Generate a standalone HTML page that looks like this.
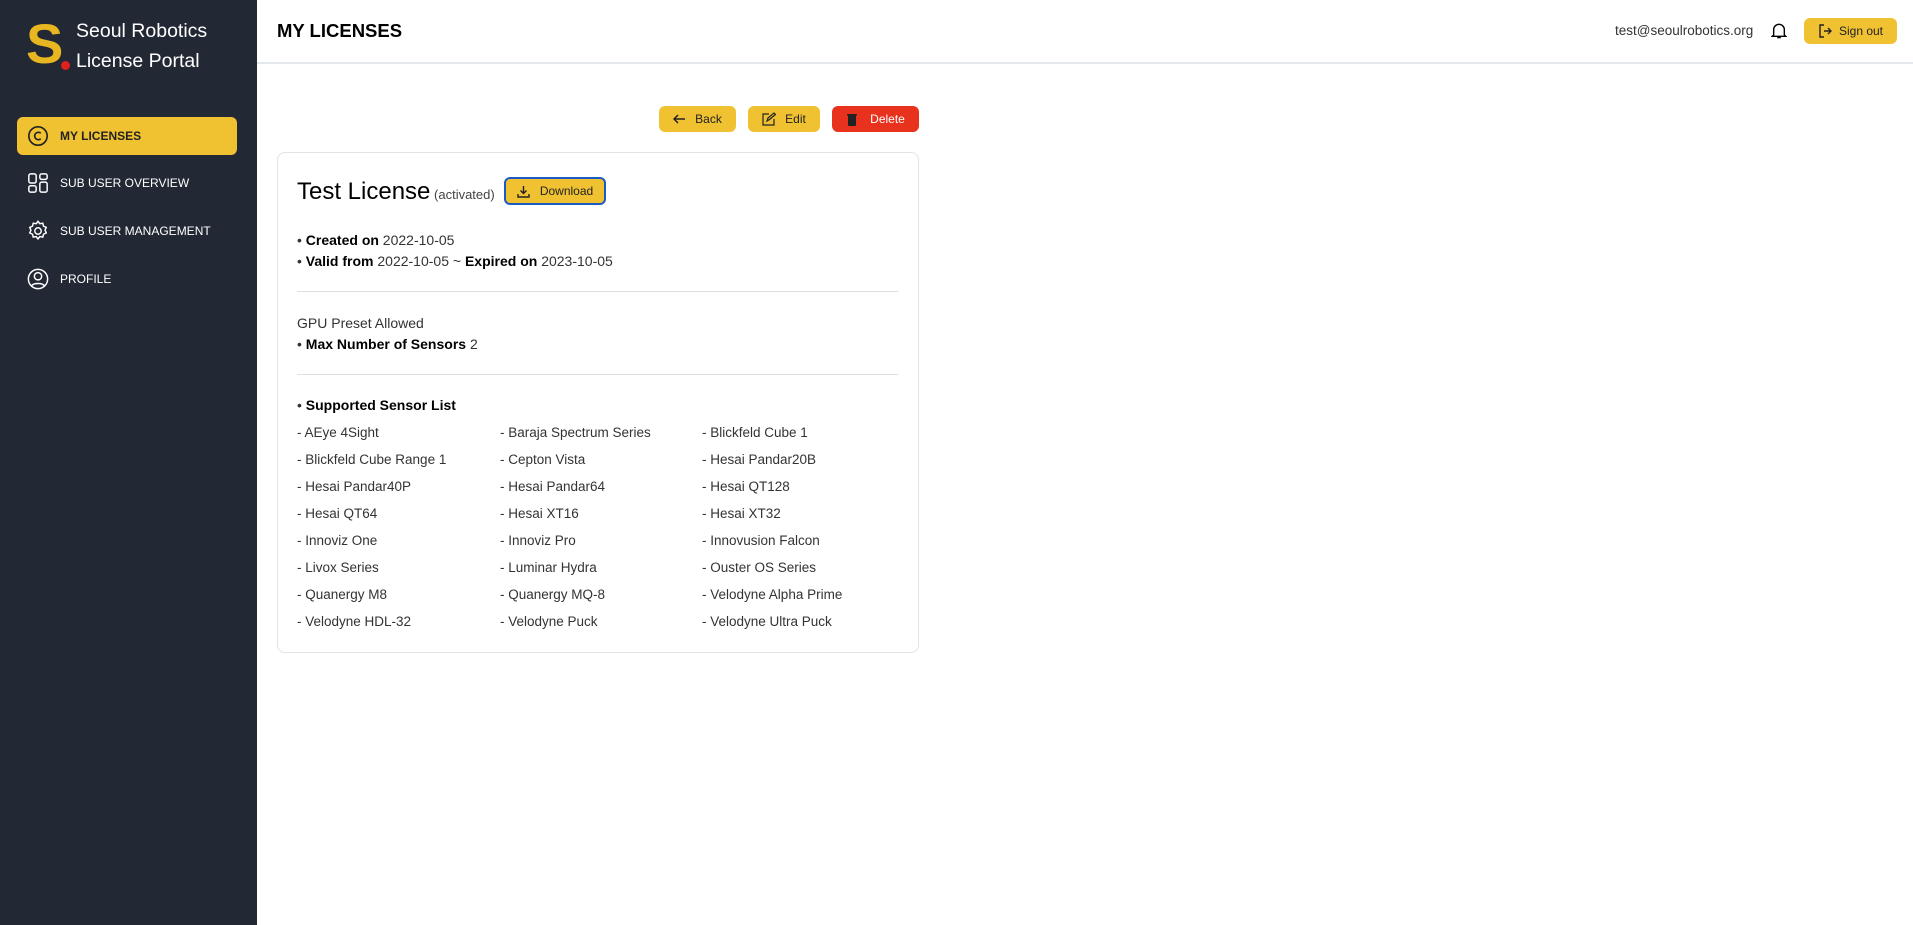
<!DOCTYPE html>
<html><head><meta charset="utf-8"><style>
*{margin:0;padding:0;box-sizing:border-box}
body{width:1913px;height:925px;background:#fff;font-family:"Liberation Sans",sans-serif;position:relative;overflow:hidden;color:#111}
.side{position:absolute;left:0;top:0;width:257px;height:925px;background:#222834}
.abs{position:absolute}
.nav{position:absolute;left:17px;width:220px;height:38px;display:flex;align-items:center;padding-left:10px;color:#fff;font-size:12px}
.nav svg{margin-right:11px}
.btn{position:absolute;height:26px;border-radius:6px;display:flex;align-items:center;justify-content:center;font-size:12px;color:#222;background:#f0c232}
.list div{position:absolute;font-size:13.5px;color:#333}
.t{font-size:14px;color:#333;position:absolute;left:297px}
b{color:#000}
</style></head><body>
<div class="side">
 <div class="abs" style="left:26px;top:14px;font-size:56px;font-weight:bold;color:#e8b620;line-height:60px">S</div>
 <div class="abs" style="left:61px;top:61px;width:9px;height:9px;border-radius:50%;background:#e0201c"></div>
 <div class="abs" style="left:76px;top:16px;color:#fff;font-size:19.5px;line-height:30px">Seoul Robotics<br>License Portal</div>
 <div class="nav" style="top:117px;background:#f0c232;border-radius:6px;color:#222;font-weight:bold">
  <svg width="22" height="22" viewBox="0 0 24 24" fill="none" stroke="#222" stroke-width="1.8"><circle cx="12" cy="12" r="10"/><path d="M15 9a4 4 0 1 0 0 6"/></svg>MY LICENSES</div>
 <div class="nav" style="top:164px"><svg width="22" height="22" viewBox="0 0 24 24" fill="none" stroke="#fff" stroke-width="1.6"><rect x="2" y="2" width="8" height="10" rx="2"/><rect x="14" y="2" width="8" height="6" rx="2"/><rect x="2" y="15" width="8" height="7" rx="2"/><rect x="14" y="11" width="8" height="11" rx="2"/></svg>SUB USER OVERVIEW</div>
 <div class="nav" style="top:212px"><svg width="22" height="22" viewBox="0 0 24 24" fill="none" stroke="#fff" stroke-width="1.6"><circle cx="12" cy="12" r="3.5"/><path d="M12 1.5l2 2.6 3.2-.6.8 3.2 3 1.4-1.3 3 1.3 3-3 1.4-.8 3.2-3.2-.6-2 2.6-2-2.6-3.2.6-.8-3.2-3-1.4 1.3-3-1.3-3 3-1.4.8-3.2 3.2.6z"/></svg>SUB USER MANAGEMENT</div>
 <div class="nav" style="top:260px"><svg width="22" height="22" viewBox="0 0 24 24" fill="none" stroke="#fff" stroke-width="1.6"><circle cx="12" cy="12" r="10.5"/><circle cx="12" cy="9" r="4"/><path d="M5 19.5c2-3.5 12-3.5 14 0"/></svg>PROFILE</div>
</div>
<div class="abs" style="left:257px;top:0;right:0;height:64px;border-bottom:2px solid #e4e7eb"></div>
<div class="abs" style="left:277px;top:20px;font-size:18.5px;font-weight:bold;color:#000">MY LICENSES</div>
<div class="abs" style="left:1615px;top:23px;font-size:13.5px;color:#333">test@seoulrobotics.org</div>
<svg class="abs" style="left:1771px;top:21px" width="16" height="19" viewBox="0 0 18 20" fill="none" stroke="#000" stroke-width="1.6"><path d="M3 15V9a6 6 0 0 1 12 0v6l1.5 1.5h-15z"/><path d="M7 18h4"/></svg>
<div class="btn" style="left:1804px;top:18px;width:93px;height:26px;font-size:12px;font-weight:normal"><svg width="14" height="14" viewBox="0 0 14 14" fill="none" stroke="#222" stroke-width="1.4" style="margin-right:7px"><path d="M6 1H2v12h4M6 7h7M10 4l3 3-3 3"/></svg>Sign out</div>
<div class="btn" style="left:659px;top:106px;width:77px"><svg width="13" height="10" viewBox="0 0 13 10" fill="none" stroke="#222" stroke-width="1.5" style="margin-right:9px"><path d="M12 5H1M5 1L1 5l4 4"/></svg>Back</div>
<div class="btn" style="left:748px;top:106px;width:72px"><svg width="14" height="14" viewBox="0 0 14 14" fill="none" stroke="#222" stroke-width="1.2" style="margin-right:9px"><path d="M7 2H1v11h11V7M5 9l1-3 6-5 1.5 1.5-6 5z"/></svg>Edit</div>
<div class="btn" style="left:832px;top:106px;width:87px;background:#e8321e;color:#fff"><svg width="12" height="13" viewBox="0 0 12 13" style="margin-right:12px"><rect x="2" y="2" width="8" height="11" rx="1" fill="#222"/><rect x="1" y="1" width="10" height="1.5" fill="#222"/></svg>Delete</div>
<div class="abs" style="left:277px;top:152px;width:642px;height:501px;border:1px solid #e0e3e8;border-radius:8px"></div>
<div class="abs" style="left:297px;top:178px;font-size:24px;color:#000">Test License<span style="font-size:13px;color:#444"> (activated)</span></div>
<div class="btn" style="left:504px;top:177px;width:102px;height:28px;border:2px solid #1d5bc4;font-size:12px"><svg width="13" height="13" viewBox="0 0 13 13" fill="none" stroke="#222" stroke-width="1.4" style="margin-right:10px"><path d="M6.5 1v7M3.5 5.5l3 3 3-3M1 9v3h11V9"/></svg>Download</div>
<div class="t" style="top:232px">• <b>Created on</b> 2022-10-05</div>
<div class="t" style="top:253px">• <b>Valid from</b> 2022-10-05 ~ <b>Expired on</b> 2023-10-05</div>
<div class="abs" style="left:297px;top:291px;width:601px;height:1px;background:#dcdfe3"></div>
<div class="t" style="top:315px">GPU Preset Allowed</div>
<div class="t" style="top:336px">• <b>Max Number of Sensors</b> 2</div>
<div class="abs" style="left:297px;top:374px;width:601px;height:1px;background:#dcdfe3"></div>
<div class="t" style="top:397px">• <b>Supported Sensor List</b></div>
<div class="list">
<div style="left:297px;top:425px">- AEye 4Sight</div><div style="left:500px;top:425px">- Baraja Spectrum Series</div><div style="left:702px;top:425px">- Blickfeld Cube 1</div>
<div style="left:297px;top:452px">- Blickfeld Cube Range 1</div><div style="left:500px;top:452px">- Cepton Vista</div><div style="left:702px;top:452px">- Hesai Pandar20B</div>
<div style="left:297px;top:479px">- Hesai Pandar40P</div><div style="left:500px;top:479px">- Hesai Pandar64</div><div style="left:702px;top:479px">- Hesai QT128</div>
<div style="left:297px;top:506px">- Hesai QT64</div><div style="left:500px;top:506px">- Hesai XT16</div><div style="left:702px;top:506px">- Hesai XT32</div>
<div style="left:297px;top:533px">- Innoviz One</div><div style="left:500px;top:533px">- Innoviz Pro</div><div style="left:702px;top:533px">- Innovusion Falcon</div>
<div style="left:297px;top:560px">- Livox Series</div><div style="left:500px;top:560px">- Luminar Hydra</div><div style="left:702px;top:560px">- Ouster OS Series</div>
<div style="left:297px;top:587px">- Quanergy M8</div><div style="left:500px;top:587px">- Quanergy MQ-8</div><div style="left:702px;top:587px">- Velodyne Alpha Prime</div>
<div style="left:297px;top:614px">- Velodyne HDL-32</div><div style="left:500px;top:614px">- Velodyne Puck</div><div style="left:702px;top:614px">- Velodyne Ultra Puck</div>
</div>
</body></html>
